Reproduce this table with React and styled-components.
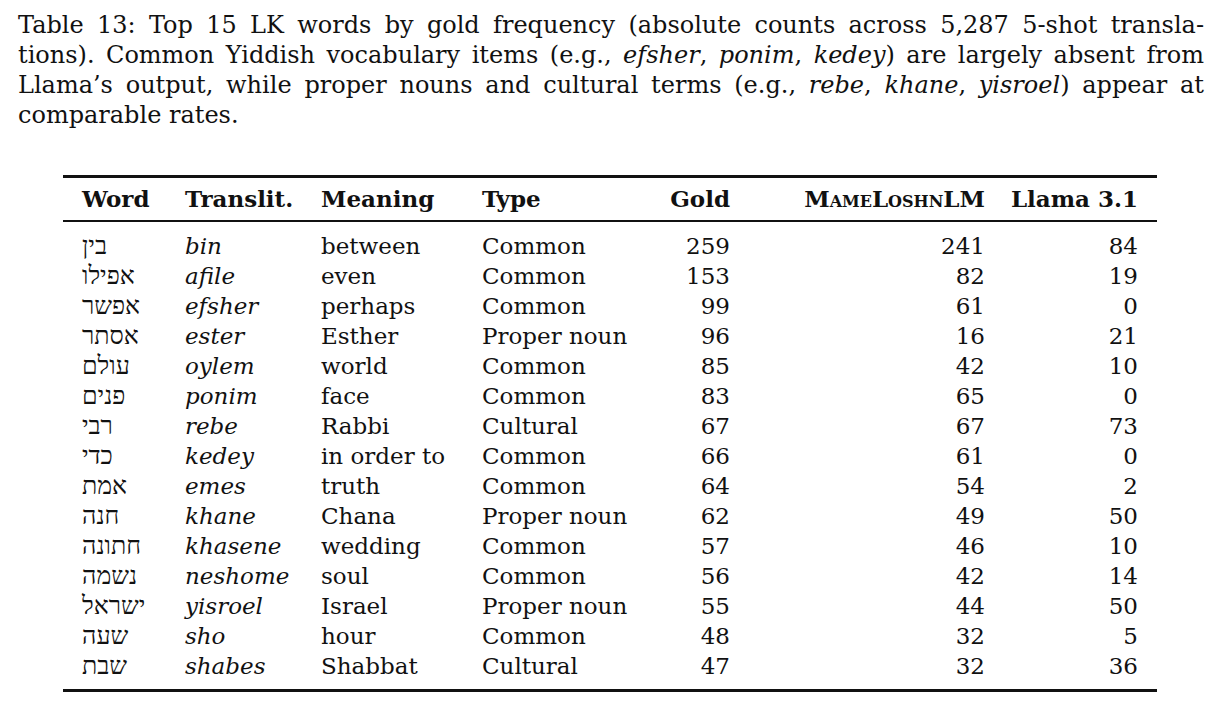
import React from 'react';
import styled, { createGlobalStyle } from 'styled-components';

const GlobalStyle = createGlobalStyle`
  html, body {
    margin: 0;
    padding: 0;
    background: #fff;
  }

  body {
    font-family: 'DejaVu Serif', 'Liberation Serif', serif;
    color: #111;
  }
`;

const COLUMNS = '103px 136px 161px 170px 78px 255px 153px';

const Page = styled.div`
  width: 1224px;
  height: 711px;
  overflow: hidden;
`;

const Caption = styled.div`
  padding: 10px 20px 0 18px;
  font-size: 24px;
  line-height: 30px;
`;

const CaptionLine = styled.div`
  text-align: justify;
  text-align-last: ${p => (p.$last ? 'left' : 'justify')};
  white-space: nowrap;
`;

const Table = styled.div`
  margin: 45px 0 0 63px;
  width: 1094px;
  border-top: 3px solid #111;
  border-bottom: 3px solid #111;
  font-size: 23px;
  line-height: 30px;
`;

const HeaderRow = styled.div`
  display: grid;
  grid-template-columns: ${COLUMNS};
  padding: 6px 19px 6px;
  border-bottom: 2px solid #111;
  font-weight: bold;
`;

const Body = styled.div`
  padding: 9px 0 8px;
`;

const Row = styled.div`
  display: grid;
  grid-template-columns: ${COLUMNS};
  padding: 0 19px;
  height: 30px;
`;

const Cell = styled.div`
  text-align: ${p => (p.$right ? 'right' : 'left')};
  font-style: ${p => (p.$italic ? 'italic' : 'normal')};
  white-space: nowrap;
`;

const Hebrew = styled(Cell)`
  font-family: 'Liberation Serif', 'DejaVu Sans', serif;
  font-size: 25px;
  direction: rtl;
  text-align: left;
`;

const SmallCaps = styled.span`
  font-variant: small-caps;
`;

const rows = [
  ['בין', 'bin', 'between', 'Common', 259, 241, 84],
  ['אפילו', 'afile', 'even', 'Common', 153, 82, 19],
  ['אפשר', 'efsher', 'perhaps', 'Common', 99, 61, 0],
  ['אסתר', 'ester', 'Esther', 'Proper noun', 96, 16, 21],
  ['עולם', 'oylem', 'world', 'Common', 85, 42, 10],
  ['פנים', 'ponim', 'face', 'Common', 83, 65, 0],
  ['רבי', 'rebe', 'Rabbi', 'Cultural', 67, 67, 73],
  ['כדי', 'kedey', 'in order to', 'Common', 66, 61, 0],
  ['אמת', 'emes', 'truth', 'Common', 64, 54, 2],
  ['חנה', 'khane', 'Chana', 'Proper noun', 62, 49, 50],
  ['חתונה', 'khasene', 'wedding', 'Common', 57, 46, 10],
  ['נשמה', 'neshome', 'soul', 'Common', 56, 42, 14],
  ['ישראל', 'yisroel', 'Israel', 'Proper noun', 55, 44, 50],
  ['שעה', 'sho', 'hour', 'Common', 48, 32, 5],
  ['שבת', 'shabes', 'Shabbat', 'Cultural', 47, 32, 36],
];

const App = () => (
  <Page>
    <GlobalStyle />
    <Caption>
      <CaptionLine>
        Table 13: Top 15 LK words by gold frequency (absolute counts across 5,287 5-shot transla-
      </CaptionLine>
      <CaptionLine>
        tions). Common Yiddish vocabulary items (e.g., <i>efsher</i>, <i>ponim</i>, <i>kedey</i>) are
        largely absent from
      </CaptionLine>
      <CaptionLine>
        Llama’s output, while proper nouns and cultural terms (e.g., <i>rebe</i>, <i>khane</i>,{' '}
        <i>yisroel</i>) appear at
      </CaptionLine>
      <CaptionLine $last>comparable rates.</CaptionLine>
    </Caption>

    <Table>
      <HeaderRow>
        <Cell>Word</Cell>
        <Cell>Translit.</Cell>
        <Cell>Meaning</Cell>
        <Cell>Type</Cell>
        <Cell $right>Gold</Cell>
        <Cell $right>
          <SmallCaps>MameLoshn</SmallCaps>LM
        </Cell>
        <Cell $right>Llama 3.1</Cell>
      </HeaderRow>
      <Body>
        {rows.map(([word, translit, meaning, type, gold, mame, llama]) => (
          <Row key={translit}>
            <Hebrew>{word}</Hebrew>
            <Cell $italic>{translit}</Cell>
            <Cell>{meaning}</Cell>
            <Cell>{type}</Cell>
            <Cell $right>{gold}</Cell>
            <Cell $right>{mame}</Cell>
            <Cell $right>{llama}</Cell>
          </Row>
        ))}
      </Body>
    </Table>
  </Page>
);

export default App;
